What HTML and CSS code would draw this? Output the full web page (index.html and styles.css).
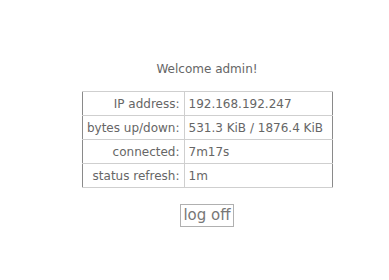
FILE: index.html
```html
<!DOCTYPE html>
<html>
<head>
<meta charset="utf-8">
<link rel="stylesheet" href="styles.css">
</head>
<body>
<div class="page">
  <p class="welcome">Welcome admin!</p>
  <table class="status">
    <tr><td class="label">IP address:</td><td class="value">192.168.192.247</td></tr>
    <tr><td class="label">bytes up/down:</td><td class="value">531.3 KiB / 1876.4 KiB</td></tr>
    <tr><td class="label">connected:</td><td class="value">7m17s</td></tr>
    <tr><td class="label">status refresh:</td><td class="value">1m</td></tr>
  </table>
  <div class="actions"><button class="logoff">log off</button></div>
</div>
</body>
</html>
```
FILE: styles.css
```css
html, body {
  margin: 0;
  padding: 0;
  background: #fff;
}
.page {
  padding: 62px 0 0 25px;
  display: flex;
  flex-direction: column;
  align-items: center;
  font-family: "DejaVu Sans", Verdana, sans-serif;
  font-size: 12px;
  color: #666;
}
.welcome {
  margin: 0 0 14px 0;
  line-height: 15px;
}
.status {
  border-collapse: collapse;
  border: 1px solid #8a8a8a;
  width: 251px;
}
.status td {
  height: 23px;
  padding: 0 4px;
  border-top: 1px solid #cfcfcf;
  border-bottom: 1px solid #cfcfcf;
  white-space: nowrap;
}
.status .label {
  text-align: right;
  border-right: 1px solid #cfcfcf;
  width: 93px;
}
.status .value {
  text-align: left;
}
.actions {
  margin-top: 16px;
}
.logoff {
  font-family: "DejaVu Sans", Verdana, sans-serif;
  font-size: 15px;
  color: #777;
  background: #fff;
  border: 1px solid #b0b0b0;
  padding: 2px 2px;
  height: 23px;
  line-height: 17px;
}
```
